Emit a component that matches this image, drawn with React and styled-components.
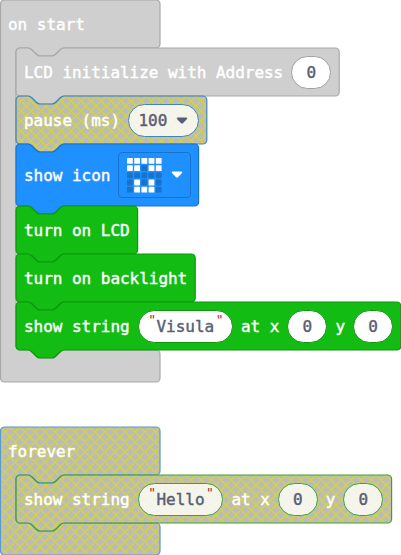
import React from "react";
import styled, { createGlobalStyle, css } from "styled-components";

const GlobalStyle = createGlobalStyle`
  body { margin: 0; background: #fff; overflow: hidden; }
  * { box-sizing: border-box; }
`;

const themes = {
  gray: { fill: "#cfcfcf", stroke: "#a8a8a8", field: "#a0a0a0" },
  blue: { fill: "#1e90ff", stroke: "#1873cc", field: "#1873cc" },
  green: { fill: "#12bc12", stroke: "#0e960e", field: "#0e960e" },
  disabledBlue: { fill: "url(#disabled)", stroke: "#3f84c4", field: "#3f84c4", off: true },
  disabledLoop: { fill: "url(#disabled)", stroke: "#5a98d0", field: "#5a98d0", off: true },
  disabledGreen: { fill: "url(#disabled)", stroke: "#38a04a", field: "#38a04a", off: true },
};

const Workspace = styled.main`
  width: 401px;
  height: 555px;
  overflow: hidden;
  display: flex;
  flex-direction: column;
  gap: 45px;
  font: 16px/20px "DejaVu Sans Mono", "Liberation Mono", monospace;
  letter-spacing: -0.033px;
  color: #fff;
  -webkit-text-stroke: 0.42px currentColor;
`;

const Event = styled.section`
  position: relative;
  flex: none;
  width: 401px;
  padding-bottom: 32px;
`;

const EventTitle = styled.header`
  position: relative;
  display: flex;
  align-items: center;
  height: 48px;
  padding: 2px 0 0 8px;
`;

const Statements = styled.div`
  position: relative;
  display: flex;
  flex-direction: column;
  align-items: flex-start;
  padding-left: 16px;
`;

const Statement = styled.div`
  position: relative;
  display: flex;
  align-items: center;
  gap: 8px;
  height: ${(p) => p.$height}px;
  padding: 0 8px;
  white-space: pre;
`;

const Shape = styled.svg`
  position: absolute;
  inset: 0 auto auto 0;
  overflow: visible;
`;

const Label = styled.span`
  position: relative;
  padding-top: 2px;
`;

const Field = styled.span`
  position: relative;
  display: flex;
  align-items: center;
  justify-content: center;
  height: 33px;
  min-width: 40px;
  width: ${(p) => (p.$width ? p.$width + "px" : "auto")};
  padding: 2px 9.3px 0;
  border: 1px solid ${(p) => p.$border};
  border-radius: 17px;
  background: ${(p) => (p.$off ? "rgba(255,255,255,0.82)" : "#fff")};
  color: #575e75;
`;

const Quote = styled.span`
  width: 9.6px;
  font-size: 13px;
  text-align: center;
  color: #b01c24;
  -webkit-text-stroke: 0;
  transform: translate(${(p) => (p.$end ? 1.2 : 0)}px, -7px);
`;

const Caret = styled.svg`
  flex: none;
  width: 12px;
  height: 7px;
  transform: translateY(-1px);
  ${(p) =>
    p.$spaced &&
    css`
      margin-left: 9px;
    `}
`;

const IconField = styled.span`
  position: relative;
  display: flex;
  align-items: center;
  gap: 9px;
  width: 72.4px;
  height: 46px;
  padding-left: 8px;
  border: 1px solid #1873cc;
  border-radius: 4px;
`;

const Leds = styled.svg`
  flex: none;
  width: 35px;
  height: 35px;
`;

const notch = "c2,0 3,1 4,2 l4,4 c1,1 2,2 4,2 h12 c2,0 3,-1 4,-2 l4,-4 c1,-1 2,-2 4,-2";
const notchBack = "c-2,0 -3,1 -4,2 l-4,4 c-1,1 -2,2 -4,2 h-12 c-2,0 -3,-1 -4,-2 l-4,-4 c-1,-1 -2,-2 -4,-2";

const statementPath = (w, h) =>
  `M0,4 a4,4 0 0 1 4,-4 H12 ${notch} H${w - 4} a4,4 0 0 1 4,4 V${h - 4} a4,4 0 0 1 -4,4 H48 ${notchBack} H4 a4,4 0 0 1 -4,-4 z`;

const eventPath = (inner) =>
  `M0.5,4 a4,4 0 0 1 4,-4 H156 a4,4 0 0 1 4,4 V44 a4,4 0 0 1 -4,4 H64 ${notchBack} H20 a4,4 0 0 0 -4,4 V${44 + inner} a4,4 0 0 0 4,4 H28 ${notch} H156 a4,4 0 0 1 4,4 V${76 + inner} a4,4 0 0 1 -4,4 H4.5 a4,4 0 0 1 -4,-4 z`;

function BlockShape({ d, theme, width, height }) {
  return (
    <Shape width={width} height={height} aria-hidden="true">
      <path d={d} fill={theme.fill} fillOpacity={theme.off ? 0.8 : 1} stroke={theme.stroke} strokeWidth="1.2" />
    </Shape>
  );
}

function Block({ kind, width, height = 48, children }) {
  return (
    <Statement $height={height}>
      <BlockShape d={statementPath(width, height)} theme={themes[kind]} width={width} height={height} />
      {children}
    </Statement>
  );
}

function EventBlock({ title, kind, inner, children }) {
  return (
    <Event>
      <BlockShape d={eventPath(inner)} theme={themes[kind]} width={160} height={inner + 80} />
      <EventTitle>{title}</EventTitle>
      <Statements>{children}</Statements>
    </Event>
  );
}

function Value({ kind, width, children }) {
  const theme = themes[kind];
  return (
    <Field $border={theme.field} $off={theme.off} $width={width}>
      {children}
    </Field>
  );
}

function DownCaret({ spaced, color }) {
  return (
    <Caret viewBox="0 0 12 7" $spaced={spaced}>
      <path d="M1.8 .5H10.2Q12 .5 11 2L7.2 5.9Q6 7 4.8 5.9L1 2Q0 .5 1.8 .5Z" fill={color} />
    </Caret>
  );
}

function ShowString({ kind, text, width }) {
  return (
    <Block kind={kind} width={width}>
      <Label>show string</Label>
      <Value kind={kind} width={text.length * 9.6 + 37.8}>
        <Quote>"</Quote>
        {text}
        <Quote $end>"</Quote>
      </Value>
      <Label>at x</Label>
      <Value kind={kind}>0</Value>
      <Label>y</Label>
      <Value kind={kind}>0</Value>
    </Block>
  );
}

const iconPattern = "1111111011000000101001110";

export default function App() {
  return (
    <Workspace>
      <GlobalStyle />
      <EventBlock title="on start" kind="gray" inner={302}>
        <Block kind="gray" width={323.2}>
          <Label>LCD initialize with Address</Label>
          <Value kind="gray">0</Value>
        </Block>
        <Block kind="disabledBlue" width={190.8}>
          <Label>pause (ms)</Label>
          <Value kind="disabledBlue" width={70.8}>
            100
            <DownCaret spaced color="#575e75" />
          </Value>
        </Block>
        <Block kind="blue" width={182.6} height={62}>
          <Label>show icon</Label>
          <IconField>
            <Leds viewBox="0 0 35 35">
              {[...iconPattern].map((led, i) => (
                <rect
                  key={i}
                  x={(i % 5) * 7.2}
                  y={Math.floor(i / 5) * 7.2}
                  width="5.8"
                  height="5.8"
                  rx="0.6"
                  fill={led === "1" ? "#fff" : "#1873cc"}
                />
              ))}
            </Leds>
            <DownCaret color="#fff" />
          </IconField>
        </Block>
        <Block kind="green" width={121.6}>
          <Label>turn on LCD</Label>
        </Block>
        <Block kind="green" width={179.2}>
          <Label>turn on backlight</Label>
        </Block>
        <ShowString kind="green" text="Visula" width={384.8} />
      </EventBlock>
      <EventBlock title="forever" kind="disabledLoop" inner={48}>
        <ShowString kind="disabledGreen" text="Hello" width={375.6} />
      </EventBlock>
      <Shape width="0" height="0" aria-hidden="true">
        <defs>
          <pattern id="disabled" width="10" height="10" patternUnits="userSpaceOnUse">
            <rect width="10" height="10" fill="#aaa" />
            <path
              d="M-1 -1L11 11M11 -1L-1 11M-1 9L1 11M9 -1L11 1M-1 1L1 -1M9 11L11 9"
              stroke="#cc0"
              strokeWidth="1.3"
            />
          </pattern>
        </defs>
      </Shape>
    </Workspace>
  );
}
